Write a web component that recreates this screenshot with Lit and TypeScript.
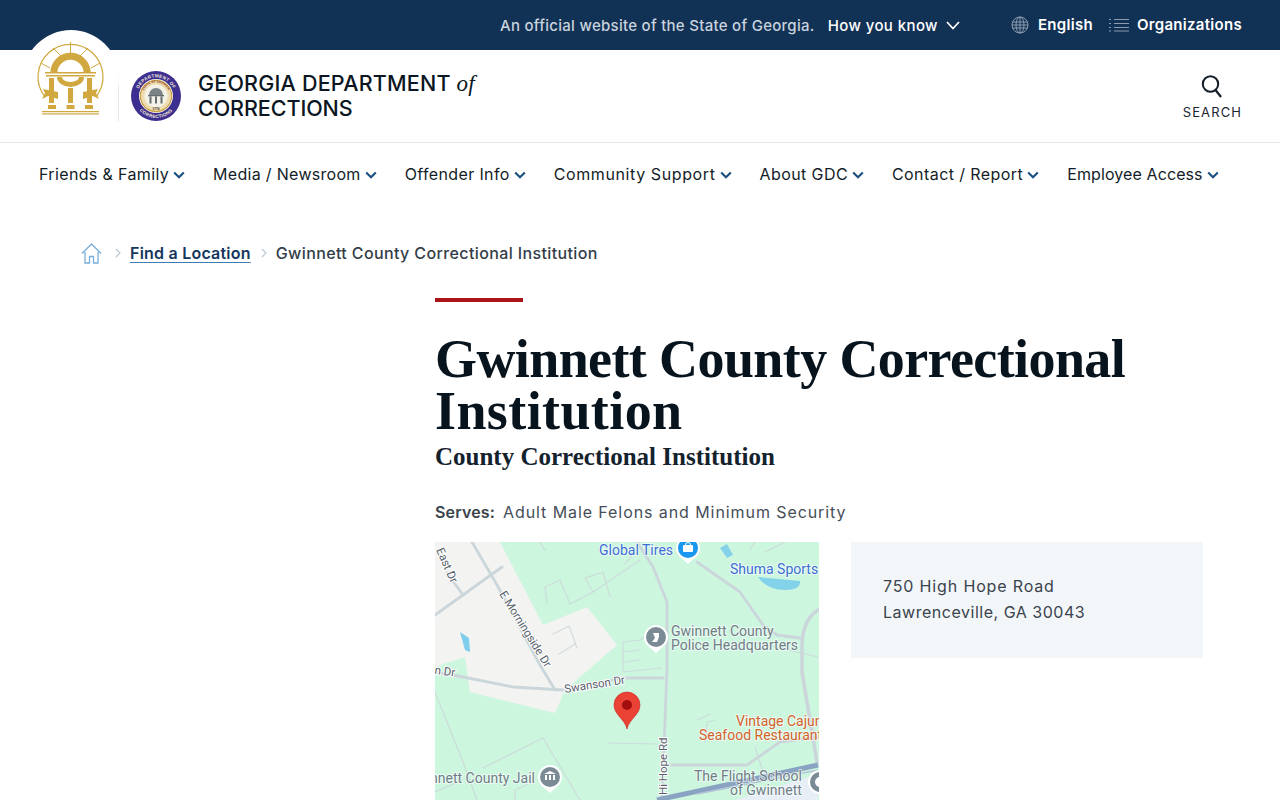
import { LitElement, html, css, svg } from "lit";
import { customElement } from "lit/decorators.js";

const chevron = html`<svg class="chev" viewBox="0 0 12 8" width="12" height="8"><path d="M1.2 1.4 6 6.2l4.8-4.8" fill="none" stroke="#1a5080" stroke-width="2.1"/></svg>`;

const navItems: [string, number][] = [
  ["Friends & Family", 0.36],
  ["Media / Newsroom", 0.3],
  ["Offender Info", 0.37],
  ["Community Support", 0.6],
  ["About GDC", 0.41],
  ["Contact / Report", 0.42],
  ["Employee Access", 0.1],
];

const arch = html`<svg class="arch" viewBox="0 0 70 76" width="70" height="76">
  <g fill="none" stroke="#d0a83f">
    <path d="M9 56A32.5 32.5 0 1 1 60 56" stroke-width="1.2"/>
    <path d="M34.5 1V12M17 7l9 9M52 7l-9 9M5 22l9 5M64 22l-9 5" stroke-width="1"/>
    <path d="M17.8 32A16.7 16.7 0 0 1 51.2 32" stroke-width="7"/>
  </g>
  <g fill="#d0a83f">
    <rect x="9" y="31" width="51" height="1.5"/>
    <rect x="10" y="34" width="49" height="1.5"/>
    <path d="M21 36A13.5 10 0 0 0 48 36H43A8.5 5 0 0 1 26 36z"/>
    <rect x="13" y="37" width="5" height="25"/>
    <rect x="32" y="47" width="5" height="15"/>
    <rect x="51" y="37" width="5" height="25"/>
    <rect x="12" y="64" width="8" height="4"/>
    <rect x="30.5" y="64" width="8" height="4"/>
    <rect x="49" y="64" width="8" height="4"/>
    <rect x="6" y="70" width="57" height="1.2"/>
    <rect x="6" y="72.3" width="57" height="1.2"/>
    <path d="M7 48 22 51V58L12 55 6 58 9 52z"/>
    <path d="M62 48 47 51V58L57 55 63 58 60 52z"/>
  </g>
</svg>`;

const seal = html`<svg class="seal" viewBox="0 0 50 50" width="50" height="50">
  <defs>
    <path id="sealTop" d="M6.4 25A18.6 18.6 0 0 1 43.6 25"/>
    <path id="sealBot" d="M3 25A22 22 0 0 0 47 25"/>
    <path id="sealIn" d="M11.5 25A13.5 13.5 0 0 1 38.5 25"/>
  </defs>
  <circle cx="25" cy="25" r="25" fill="#3d2f8f"/>
  <circle cx="25" cy="25" r="17" fill="#fbf8ef"/>
  <circle cx="25" cy="25" r="15.6" fill="#ecdcae" stroke="#c9a24a" stroke-width="1.2"/>
  <circle cx="25" cy="25" r="11.5" fill="#f4f1e8"/>
  <text class="st"><textPath href="#sealTop" startOffset="50%" text-anchor="middle">DEPARTMENT OF</textPath></text>
  <text class="st"><textPath href="#sealBot" startOffset="50%" text-anchor="middle">CORRECTIONS</textPath></text>
  <text class="si"><textPath href="#sealIn" startOffset="50%" text-anchor="middle">STATE OF GEORGIA</textPath></text>
  <text class="yr" x="25" y="38.6" text-anchor="middle">1776</text>
  <path d="M18 24a7 7 0 0 1 14 0z" fill="#7b8387"/>
  <path d="M17 24h16v1.2H17zM18.5 25.5h2v7h-2zM24 25.5h2v7h-2zM29.5 25.5h2v7h-2z" fill="#656d71"/>
</svg>`;

const roads = svg`
  <g fill="none" stroke="#cbd6da" stroke-linecap="round" stroke-linejoin="round">
    <g stroke-width="2.8">
      <path d="M37 0 62 43 105 123 120 148"/>
      <path d="M0 73 67 25"/>
      <path d="M12 31 28 53"/>
      <path d="M0 130 28 135 78 145 128 148 188 136 228 136"/>
      <path d="M202 0 218 25 232 60V126L227 258"/>
      <path d="M262 20 305 50 328 83 342 93 365 96"/>
      <path d="M383 68Q367 78 367 105V130L382 220" stroke-width="3.6"/>
      <path d="M235 223H312L345 200 383 195"/>
    </g>
    <g stroke-width="1.2" stroke-opacity=".8">
      <path d="M173 201 222 202"/>
      <path d="M0 150 28 220 42 258"/>
      <path d="M48 226 108 196 145 258"/>
      <path d="M80 258V248L98 240"/>
      <path d="M0 250 28 238"/>
      <path d="M118 92 134 84 142 106M124 112 140 102"/>
      <path d="M188 100 205 98M188 110 205 108M188 120 205 118M188 130 226 126M188 100V128M205 98 218 88"/>
      <path d="M112 62 110 45 125 38 135 62 158 50 150 36 168 30 175 55M158 50 205 18M190 22 200 10"/>
      <path d="M105 0 110 8M320 0 315 8M350 0 330 10M320 100 383 115"/>
      <path d="M262 178 275 172M270 200 272 180 280 178M320 205 328 230"/>
    </g>
  </g>
`;

const gpin = (x: number, y: number, fill: string, r = 12) => svg`
  <path d="M${x} ${y + r + 4}l-6-5.5A${r} ${r} 0 1 1 ${x + 6} ${y + r - 1.5}z" fill="#fff"/>
  <circle cx=${x} cy=${y} r=${r - 2} fill=${fill}/>
`;

const map = html`<svg class="map" viewBox="0 0 384 258" width="384" height="258">
  <rect width="384" height="258" fill="#cdf6df"/>
  <path d="M0 0H65L108 83 152 65 182 103 130 148 120 171 35 150 30 115 0 125z" fill="#f3f3f1"/>
  <path d="M300 258 383 232V258z" fill="#e8eef6"/>
  <path d="M25 90 34 96 35 110 30 108z" fill="#7fcdec"/>
  <path d="M285 6 292 2 298 13 292 16z" fill="#84d2ea"/>
  <path d="M323 35 365 39Q366 48 350 48 332 48 323 35z" fill="#84d2ea"/>
  ${roads}
  <path d="M222 258 383 223" stroke="#8aa3c2" stroke-width="5" fill="none"/>
  <path d="M262 252 383 228" stroke="#b2c2d8" stroke-width="1.5" fill="none"/>
  ${gpin(253, 6, "#1a97ef", 12)}
  <rect x="248" y="3" width="10" height="7" rx="1" fill="#fff"/>
  <path d="M250.5 3a2.5 2.5 0 0 1 5 0" fill="none" stroke="#fff" stroke-width="1"/>
  ${gpin(221, 95, "#7a8b96", 12)}
  <path d="M218 91h6v4l-2 5h-5l3-4z" fill="#fff"/>
  ${gpin(115, 235, "#7a8b96", 12)}
  <path d="M109 232l6-3 6 3zM110 233h2v5h-2zM114 233h2v5h-2zM118 233h2v5h-2z" fill="#fff"/>
  <circle cx="385" cy="240" r="11" fill="#7a8b96" stroke="#fff" stroke-width="2"/>
  <circle cx="385" cy="240" r="5" fill="#fff"/>
  <g class="lb">
    <text class="blue" x="164" y="13">Global Tires</text>
    <text class="blue" x="295" y="32">Shuma Sports</text>
    <text class="gray" x="236" y="94">Gwinnett County</text>
    <text class="gray" x="236" y="108">Police Headquarters</text>
    <text class="gray" x="100" y="241" text-anchor="end">Gwinnett County Jail</text>
    <text class="gray" x="259" y="239">The Flight School</text>
    <text class="gray" x="295" y="253">of Gwinnett</text>
    <text class="orange" x="301" y="184">Vintage Cajun</text>
    <text class="orange" x="264" y="198">Seafood Restaurant</text>
    <text class="road" transform="translate(130 151) rotate(-9)">Swanson Dr</text>
    <text class="road" transform="translate(-41 126) rotate(8)">Swanson Dr</text>
    <text class="road" transform="translate(1 8) rotate(66)">East Dr</text>
    <text class="road" transform="translate(64 52) rotate(58)">E Morningside Dr</text>
    <text class="road" transform="translate(232 253) rotate(-90)">Hi Hope Rd</text>
  </g>
  <path d="M192 187C190 177 179 173 179 163A13 13 0 0 1 205 163C205 173 194 177 192 187z" fill="#ea4335" stroke="#c5221f" stroke-width=".6"/>
  <circle cx="192" cy="163" r="5" fill="#a50e0e"/>
</svg>`;

@customElement("app-root")
export class AppRoot extends LitElement {
  static styles = css`
    :host {
      display: block;
      height: 800px;
      overflow: hidden;
      background: #fff;
      font-family: Inter, "Open Sans", sans-serif;
      color: #0b1a26;
    }
    svg { display: block; flex: none; }
    .top {
      height: 50px;
      background: #113155;
      color: #fff;
      display: flex;
      align-items: center;
      justify-content: flex-end;
      padding-right: 38px;
      font-size: 15px;
      font-weight: 500;
    }
    .official { color: #c9d3de; margin-right: 13px; letter-spacing: 0.28px; }
    .know { display: flex; align-items: center; gap: 8px; margin-right: 51px; letter-spacing: 0.4px; }
    .lang { display: flex; align-items: center; gap: 9px; margin-right: 16px; font-weight: 600; letter-spacing: 0.3px; }
    .orgs { display: flex; align-items: center; gap: 8px; font-weight: 600; letter-spacing: 0.3px; }
    .lang span, .orgs span { position: relative; top: -1px; }
    .head {
      position: relative;
      height: 92px;
      border-bottom: 1px solid #e3e6e8;
      display: flex;
      align-items: center;
      padding: 0 38px 0 118px;
    }
    .badge {
      position: absolute;
      left: 23px;
      top: -20px;
      width: 96px;
      height: 96px;
      border-radius: 50%;
      background: #fff;
      display: flex;
      justify-content: center;
      padding-top: 11px;
      box-sizing: border-box;
    }
    .rule { width: 1px; height: 50px; background: #e6e6e2; margin-right: 12px; }
    .seal { margin-right: 17px; }
    .st { font: 700 4.6px "Liberation Sans", sans-serif; fill: #f4ecd6; letter-spacing: .3px; }
    .si { font: 700 2.9px "Liberation Sans", sans-serif; fill: #8a2f2a; letter-spacing: .15px; }
    .yr { font: 700 3.2px "Liberation Sans", sans-serif; fill: #3a342a; }
    .brand { font-size: 21.5px; line-height: 24px; font-weight: 500; color: #0b1622; letter-spacing: 0.2px; margin-top: -1px; }
    .brand i { font-family: "Liberation Serif", serif; font-weight: 400; font-size: 23px; }
    .brand span { letter-spacing: -0.07px; }
    .search { margin-left: auto; display: flex; flex-direction: column; align-items: center; gap: 6px; font-size: 13px; letter-spacing: 1.1px; color: #1b2530; margin-top: 1px; }
    nav { display: flex; gap: 28px; padding: 21px 0 0 39px; height: 37px; }
    nav a { display: flex; align-items: center; gap: 4px; height: 20px; font-size: 16px; color: #131d28; white-space: nowrap; }
    .chev { margin-top: 2px; }
    .crumbs { display: flex; align-items: center; padding: 35px 0 0 81px; height: 34px; font-size: 16px; font-weight: 500; color: #333d47; white-space: nowrap; letter-spacing: 0.38px; }
    .crumbs .sep { margin: 0 9px 0 13px; }
    .crumbs .sep2 { margin: 0 9px 0 10px; }
    .crumbs u { font-weight: 600; color: #14365c; letter-spacing: 0.22px; text-underline-offset: 3px; text-decoration-color: #3e7cb0; }
    main { margin: 28px 77px 0 435px; }
    .bar { width: 88px; height: 4px; background: #ab1519; }
    h1 { margin: 31px 0 0; font: 700 54px/52px "Liberation Serif", serif; color: #08141d; letter-spacing: -0.6px; }
    h1 span { letter-spacing: 0.4px; }
    h2 { margin: 3px 0 0; font: 700 25px/34px "Liberation Serif", serif; color: #14222e; }
    .serves { margin: 26px 0 0; font-size: 16px; line-height: 24px; color: #454e57; letter-spacing: 0.92px; display: flex; gap: 8px; }
    .serves b { font-weight: 600; color: #3a434c; letter-spacing: 0.15px; }
    .row { display: grid; grid-template-columns: 384px 352px; gap: 32px; margin-top: 18px; align-items: start; }
    .map { width: 384px; height: 258px; }
    .lb text { font: 400 14px Roboto, sans-serif; stroke: #fff; stroke-opacity: .6; stroke-width: 2px; paint-order: stroke; }
    .lb .blue { fill: #3b6fd4; }
    .lb .gray { fill: #6f7d86; }
    .lb .orange { fill: #d2622a; }
    .lb .road { font-size: 11.5px; fill: #56606a; stroke-opacity: 1; }
    .addr { background: #f3f6f9; padding: 31px 32px; font-size: 16px; line-height: 26px; color: #3a434c; height: 116px; box-sizing: border-box; }
    .addr .l1 { letter-spacing: 0.85px; }
    .addr .l2 { letter-spacing: 0.52px; }
  `;

  render() {
    return html`
      <div class="top">
        <span class="official">An official website of the State of Georgia.</span>
        <span class="know">How you know
          <svg viewBox="0 0 14 9" width="14" height="9"><path d="M1 1l6 6.5L13 1" fill="none" stroke="#fff" stroke-width="1.7"/></svg>
        </span>
        <div class="lang">
          <svg viewBox="0 0 18 18" width="18" height="18"><g fill="none" stroke="#8c9cae" stroke-width="1"><circle cx="9" cy="9" r="8"/><ellipse cx="9" cy="9" rx="4" ry="8"/><path d="M9 1v16M1.5 6h15M1.5 12h15M1 9h16"/></g></svg>
          <span>English</span>
        </div>
        <div class="orgs">
          <svg viewBox="0 0 20 14" width="20" height="14"><g fill="none" stroke="#8c9cae" stroke-width="1"><path d="M5 1.5h15M5 5.5h15M5 9.5h15M5 13h15M0 1.5h2M0 5.5h2M0 9.5h2M0 13h2"/></g></svg>
          <span>Organizations</span>
        </div>
      </div>
      <header class="head">
        <div class="badge">${arch}</div>
        <div class="rule"></div>
        ${seal}
        <div class="brand">GEORGIA DEPARTMENT <i>of</i><br /><span>CORRECTIONS</span></div>
        <div class="search">
          <svg viewBox="0 0 24 24" width="24" height="24"><circle cx="10.5" cy="10" r="7.7" fill="none" stroke="#131d28" stroke-width="2"/><path d="M15.5 16l5.5 7" stroke="#131d28" stroke-width="2.2" fill="none"/></svg>
          SEARCH
        </div>
      </header>
      <nav>${navItems.map(([n, ls]) => html`<a><span style="letter-spacing:${ls}px">${n}</span>${chevron}</a>`)}</nav>
      <div class="crumbs">
        <svg viewBox="0 0 21 21" width="21" height="21"><path d="M1 10.5 10.5 1 20 10.5M4 9v11h4.5v-6.5h4V20H17V9" fill="none" stroke="#78aeda" stroke-width="1.3"/></svg>
        <svg class="sep" viewBox="0 0 6 10" width="6" height="10"><path d="M1 1l4 4-4 4" fill="none" stroke="#b9c6d2" stroke-width="1.1"/></svg>
        <u>Find a Location</u>
        <svg class="sep2" viewBox="0 0 6 10" width="6" height="10"><path d="M1 1l4 4-4 4" fill="none" stroke="#b9c6d2" stroke-width="1.1"/></svg>
        <span>Gwinnett County Correctional Institution</span>
      </div>
      <main>
        <div class="bar"></div>
        <h1>Gwinnett County Correctional <span>Institution</span></h1>
        <h2>County Correctional Institution</h2>
        <p class="serves"><b>Serves:</b><span>Adult Male Felons and Minimum Security</span></p>
        <div class="row">
          ${map}
          <div class="addr"><span class="l1">750 High Hope Road</span><br /><span class="l2">Lawrenceville, GA 30043</span></div>
        </div>
      </main>
    `;
  }
}
